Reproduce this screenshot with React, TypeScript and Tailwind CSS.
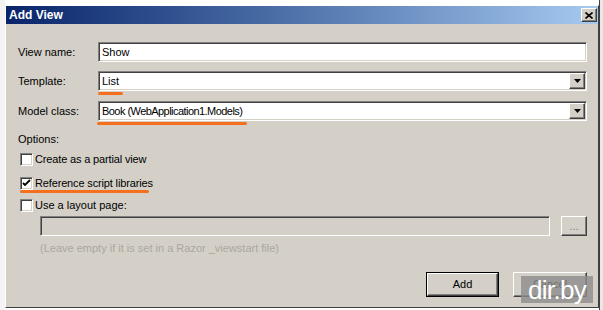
import React from "react";

const font = { fontFamily: '"Liberation Sans", Arial, sans-serif' };

const sunken =
  "border border-t-[#808080] border-l-[#808080] border-r-white border-b-white shadow-[inset_1px_1px_0_#404040,inset_-1px_-1px_0_#d4d0c8]";
const raised =
  "border border-t-white border-l-white border-r-[#404040] border-b-[#404040] shadow-[inset_-1px_-1px_0_#808080]";

function Checkbox({ checked = false }: { checked?: boolean }) {
  return (
    <span className={`w-[13px] h-[13px] bg-white shrink-0 flex items-center justify-center ${sunken}`}>
      {checked && (
        <svg width="9" height="9" viewBox="0 0 9 9">
          <path d="M1 4 L3 6 L8 1" stroke="#000" strokeWidth="1.8" fill="none" />
        </svg>
      )}
    </span>
  );
}

function Underline({ width, left }: { width: number; left: number }) {
  return (
    <div className="h-[3px] rounded-full bg-[#f4701f]" style={{ width, marginLeft: left }} />
  );
}

function Select({ value, tight = false }: { value: string; tight?: boolean }) {
  return (
    <div className={`flex-1 h-[20px] bg-white flex items-center pl-[3px] pr-[1px] ${sunken}`}>
      <span className={`flex-1 text-[11px] text-black ${tight ? "tracking-[-0.55px]" : ""}`}>{value}</span>
      <span className={`w-[16px] h-[16px] bg-[#d4d0c8] flex items-center justify-center ${raised}`}>
        <svg width="7" height="4" viewBox="0 0 7 4">
          <path d="M0 0 H7 L3.5 4 Z" fill="#000" />
        </svg>
      </span>
    </div>
  );
}

export default function App() {
  return (
    <div className="w-[603px] h-[310px] bg-white overflow-hidden relative" style={font}>
      <div className="flex h-full">
        <div className="w-[5px] shrink-0 bg-[#f4f4f4]" />
        <div className="mt-[5px] w-[594px] h-[303px] bg-[#d4d0c8] flex flex-col border border-t-white border-l-white border-r-[#404040] border-b-[#404040]">
          {/* title bar */}
          <div className="h-[18px] flex items-center justify-between bg-gradient-to-r from-[#0a246a] to-[#a6caf0] pl-[3px] pr-[1px]">
            <span className="text-white font-bold text-[12px] leading-none">Add View</span>
            <span className={`w-[16px] h-[14px] bg-[#d4d0c8] flex items-center justify-center ${raised}`}>
              <svg width="8" height="7" viewBox="0 0 8 7">
                <path d="M0.5 0.5 L7.5 6.5 M7.5 0.5 L0.5 6.5" stroke="#000" strokeWidth="1.6" />
              </svg>
            </span>
          </div>

          <div className="flex flex-col pl-[12px] pr-[11px] text-[11px] text-black">
            <div className="mt-[18px] h-[20px] flex items-center">
              <span className="w-[80px] shrink-0">View name:</span>
              <div className={`flex-1 h-[20px] bg-white flex items-center pl-[3px] ${sunken}`}>Show</div>
            </div>

            <div className="mt-[9px] h-[20px] flex items-center">
              <span className="w-[80px] shrink-0">Template:</span>
              <Select value="List" />
            </div>
            <div className="mt-[1px]">
              <Underline width={25} left={80} />
            </div>

            <div className="mt-[6px] h-[20px] flex items-center">
              <span className="w-[80px] shrink-0">Model class:</span>
              <Select value="Book (WebApplication1.Models)" tight />
            </div>
            <div className="mt-[1px]">
              <Underline width={150} left={79} />
            </div>

            <div className="mt-[8px] h-[12px] leading-[12px]">Options:</div>

            <div className="mt-[7px] h-[14px] flex items-center gap-[2px] pl-[2px] tracking-[-0.15px]">
              <Checkbox />
              <span>Create as a partial view</span>
            </div>
            <div className="mt-[10px] h-[14px] flex items-center gap-[2px] pl-[2px] tracking-[-0.15px]">
              <Checkbox checked />
              <span>Reference script libraries</span>
            </div>
            <div>
              <Underline width={129} left={2} />
            </div>
            <div className="mt-[5px] h-[14px] flex items-center gap-[2px] pl-[2px]">
              <Checkbox />
              <span>Use a layout page:</span>
            </div>

            <div className="mt-[4px] h-[20px] flex items-center pl-[22px]">
              <div className={`flex-1 h-[20px] bg-[#d4d0c8] ${sunken}`} />
              <span className={`ml-[11px] w-[26px] h-[20px] flex items-center justify-center text-[#808080] ${raised}`}>
                ...
              </span>
            </div>
            <div className="mt-[6px] pl-[22px] h-[13px] leading-[13px] text-[#aaa79f]">
              (Leave empty if it is set in a Razor _viewstart file)
            </div>

            <div className="mt-[17px] flex justify-end gap-[14px]">
              <span className="w-[73px] h-[25px] border border-black flex">
                <span className={`flex-1 flex items-center justify-center bg-[#d4d0c8] ${raised}`}>Add</span>
              </span>
              <span className={`w-[74px] h-[25px] flex items-center justify-center bg-[#d4d0c8] ${raised}`}>
                Cancel
              </span>
            </div>
          </div>
        </div>
        <div className="flex-1 bg-[#e8e8e8] border-l border-[#404040]" />
      </div>

      {/* watermark */}
      <div className="absolute left-[521px] top-[276px] w-[72px] h-[27px] bg-[#8c8c8c]/80 flex items-center justify-center">
        <span className="text-white text-[26px] leading-none tracking-tight">dir.by</span>
      </div>
    </div>
  );
}
